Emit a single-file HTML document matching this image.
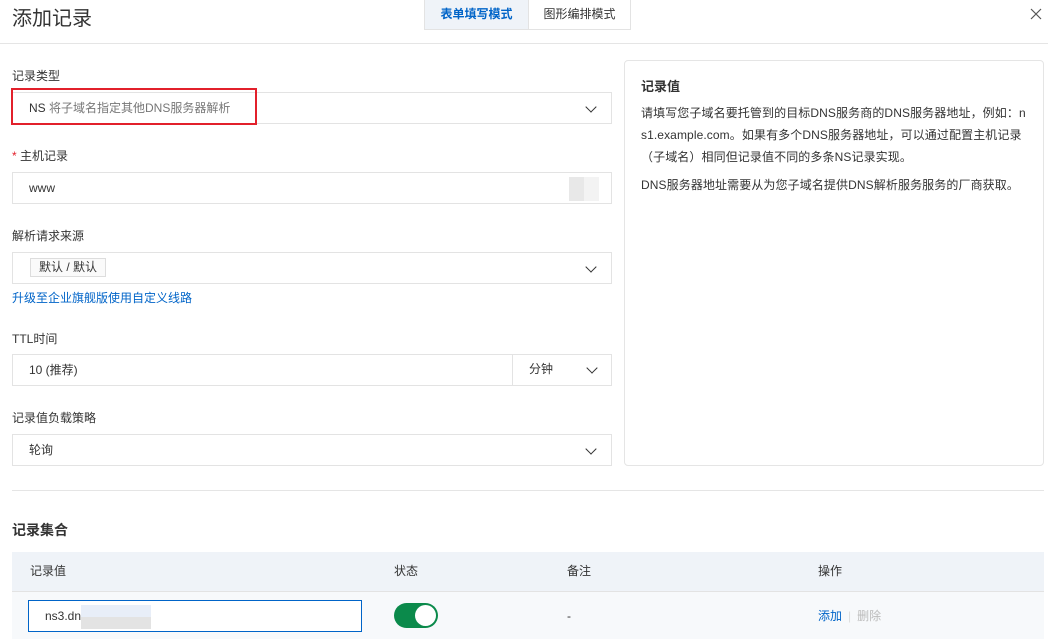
<!DOCTYPE html><html><head><meta charset="utf-8"><style>
*{box-sizing:border-box;margin:0;padding:0}
body{width:1048px;height:639px;overflow:hidden;background:#fff;font-family:"Liberation Sans","Noto Sans CJK SC",sans-serif;color:#333;font-size:12px;position:relative}
.a{position:absolute}
.box{position:absolute;left:12px;width:600px;height:32px;border:1px solid #e3e3e3;background:#fff;font-size:12px;line-height:30px;padding-left:16px;color:#333}
.chev{position:absolute;right:16px;top:10px;width:8px;height:8px;border-right:1.4px solid #333;border-bottom:1.4px solid #333;transform:rotate(45deg)}
.lbl{position:absolute;left:12px;font-size:12px;color:#333}
.p{font-size:12px;line-height:22px;color:#333;word-break:break-all;letter-spacing:0.1px}
</style></head><body>
<div class="a" style="left:12px;top:2px;font-size:20px;color:#333">添加记录</div>
<div class="a" style="left:424px;top:-1px;width:207px;height:31px;border:1px solid #e3e3e3;display:flex;font-size:12px;line-height:29px">
<div style="width:104px;background:#eff3f8;color:#0064c8;font-weight:bold;text-align:center;border-right:1px solid #e3e3e3">表单填写模式</div>
<div style="flex:1;text-align:center;color:#333">图形编排模式</div></div>
<svg class="a" style="left:1030px;top:8px" width="12" height="12"><path d="M1 1L11 11M11 1L1 11" stroke="#555" stroke-width="1.2"/></svg>
<div class="a" style="left:0;top:43px;width:1048px;height:1px;background:#e5e5e5"></div>

<div class="lbl" style="top:67px">记录类型</div>
<div class="box" style="top:92px">NS <span style="color:#777">将子域名指定其他DNS服务器解析</span><div class="chev"></div></div>
<div class="a" style="left:11px;top:88px;width:246px;height:37px;border:2px solid #e2202b"></div>

<div class="lbl" style="top:147px"><span style="color:#e2202b">*</span> 主机记录</div>
<div class="box" style="top:172px">www<div class="a" style="left:556px;top:4px;width:30px;height:24px;background:linear-gradient(90deg,#e8e8e8 50%,#f3f3f3 50%)"></div></div>

<div class="lbl" style="top:227px">解析请求来源</div>
<div class="box" style="top:252px;padding-left:17px"><span style="display:inline-block;border:1px solid #ddd;background:#fafafa;height:19px;line-height:17px;padding:0 8px;vertical-align:middle;margin-top:-3px">默认 / 默认</span><div class="chev"></div></div>
<div class="a" style="left:12px;top:289px;color:#0064c8">升级至企业旗舰版使用自定义线路</div>

<div class="lbl" style="top:330px">TTL时间</div>
<div class="box" style="top:354px">10 (推荐)<div class="a" style="left:499px;top:-1px;width:100px;height:32px;border-left:1px solid #e3e3e3;padding-left:16px">分钟<div class="chev"></div></div></div>

<div class="lbl" style="top:409px">记录值负载策略</div>
<div class="box" style="top:434px">轮询<div class="chev"></div></div>

<div class="a" style="left:624px;top:60px;width:420px;height:406px;border:1px solid #e5e5e5;border-radius:4px;padding:16px 12px 16px 16px">
<div style="font-size:13px;font-weight:bold;line-height:20px;margin-bottom:5px">记录值</div>
<div class="p">请填写您子域名要托管到的目标DNS服务商的DNS服务器地址，例如：ns1.example.com。如果有多个DNS服务器地址，可以通过配置主机记录（子域名）相同但记录值不同的多条NS记录实现。</div>
<div class="p" style="margin-top:6px">DNS服务器地址需要从为您子域名提供DNS解析服务服务的厂商获取。</div>
</div>

<div class="a" style="left:12px;top:490px;width:1032px;height:1px;background:#e5e5e5"></div>
<div class="a" style="left:12px;top:520px;font-size:14px;font-weight:bold">记录集合</div>
<div class="a" style="left:12px;top:552px;width:1032px;height:40px;background:#eff3f8;border-bottom:1px solid #e3e3e3;line-height:39px;color:#333">
<span class="a" style="left:18px">记录值</span><span class="a" style="left:382px">状态</span><span class="a" style="left:555px">备注</span><span class="a" style="left:806px">操作</span></div>
<div class="a" style="left:12px;top:592px;width:1032px;height:47px;background:#f7f9fb"></div>
<div class="a" style="left:28px;top:600px;width:334px;height:32px;border:1px solid #0064c8;background:#fff;line-height:30px;padding-left:16px">ns3.dn<span style="display:inline-block;width:70px;height:24px;vertical-align:middle;background:linear-gradient(#e8eef8 50%,#e3e3e3 50%)"></span></div>
<div class="a" style="left:394px;top:603px;width:44px;height:25px;border-radius:13px;background:#0b8a4b"><div class="a" style="left:21px;top:2px;width:21px;height:21px;border-radius:50%;background:#fff"></div></div>
<div class="a" style="left:567px;top:609px">-</div>
<div class="a" style="left:818px;top:607px"><span style="color:#0064c8">添加</span><span style="color:#ddd;margin:0 6px">|</span><span style="color:#bbb">删除</span></div>
</body></html>
